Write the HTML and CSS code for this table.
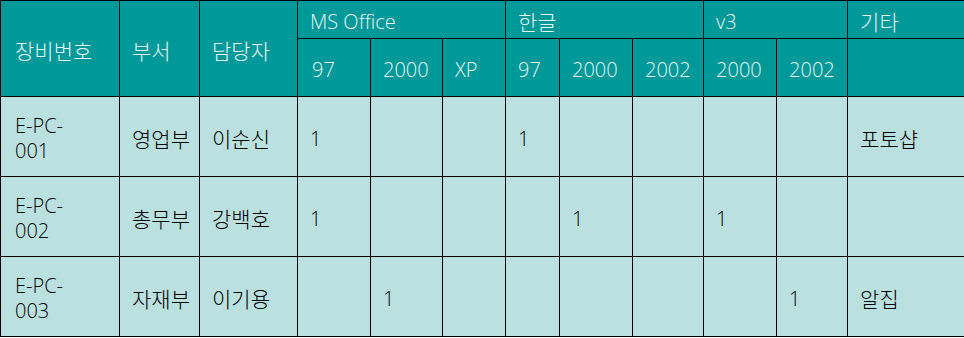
FILE: index.html
```html
<!DOCTYPE html>
<html lang="ko">
<head>
<meta charset="utf-8">
<link rel="stylesheet" href="styles.css">
</head>
<body>
<table class="grid">
  <colgroup>
    <col class="c1"><col class="c2"><col class="c3">
    <col class="c4"><col class="c5"><col class="c6">
    <col class="c7"><col class="c8"><col class="c9">
    <col class="c10"><col class="c11"><col class="c12">
  </colgroup>
  <thead>
    <tr class="h1">
      <th rowspan="2" class="ko">장비번호</th>
      <th rowspan="2" class="ko">부서</th>
      <th rowspan="2" class="ko">담당자</th>
      <th colspan="3">MS Office</th>
      <th colspan="3" class="ko">한글</th>
      <th colspan="2">v3</th>
      <th class="ko">기타</th>
    </tr>
    <tr class="h2">
      <th>97</th><th>2000</th><th>XP</th>
      <th>97</th><th>2000</th><th>2002</th>
      <th>2000</th><th>2002</th>
      <th></th>
    </tr>
  </thead>
  <tbody>
    <tr>
      <td>E-PC-<br>001</td><td class="ko">영업부</td><td class="ko">이순신</td>
      <td>1</td><td></td><td></td>
      <td>1</td><td></td><td></td>
      <td></td><td></td>
      <td class="ko">포토샵</td>
    </tr>
    <tr>
      <td>E-PC-<br>002</td><td class="ko">총무부</td><td class="ko">강백호</td>
      <td>1</td><td></td><td></td>
      <td></td><td>1</td><td></td>
      <td>1</td><td></td>
      <td></td>
    </tr>
    <tr>
      <td>E-PC-<br>003</td><td class="ko">자재부</td><td class="ko">이기용</td>
      <td></td><td>1</td><td></td>
      <td></td><td></td><td></td>
      <td></td><td>1</td>
      <td class="ko">알집</td>
    </tr>
  </tbody>
</table>
</body>
</html>
```

FILE: styles.css
```css
html, body {
  margin: 0;
  padding: 0;
  background: #ffffff;
}

.grid {
  border-collapse: collapse;
  table-layout: fixed;
  width: 965px;
  font-family: "Open Sans", "Noto Sans CJK KR", sans-serif;
  font-size: 20px;
  font-weight: 300;
}

.c1 { width: 119px; }
.c2 { width: 80px; }
.c3 { width: 98px; }
.c4 { width: 73px; }
.c5 { width: 72px; }
.c6 { width: 63px; }
.c7 { width: 54px; }
.c8 { width: 73px; }
.c9 { width: 71px; }
.c10 { width: 73px; }
.c11 { width: 71px; }
.c12 { width: 118px; }

.grid th,
.grid td {
  border: 1px solid #000000;
  padding: 3px 0 0 12px;
  text-align: left;
  vertical-align: middle;
  line-height: 25px;
  overflow: hidden;
  white-space: nowrap;
}

.grid th {
  background: #009999;
  color: #e8f4f4;
  font-weight: 300;
}

.grid td {
  background: #bbe0e0;
  color: #000000;
}

.grid .ko {
  font-family: "Noto Sans CJK KR", sans-serif;
  font-size: 21px;
  font-weight: 300;
}

.h1 { height: 38px; }
.h2 { height: 58px; }
.grid tbody tr { height: 80px; }

.grid th:first-child,
.grid td:first-child {
  padding-left: 14px;
}
```
